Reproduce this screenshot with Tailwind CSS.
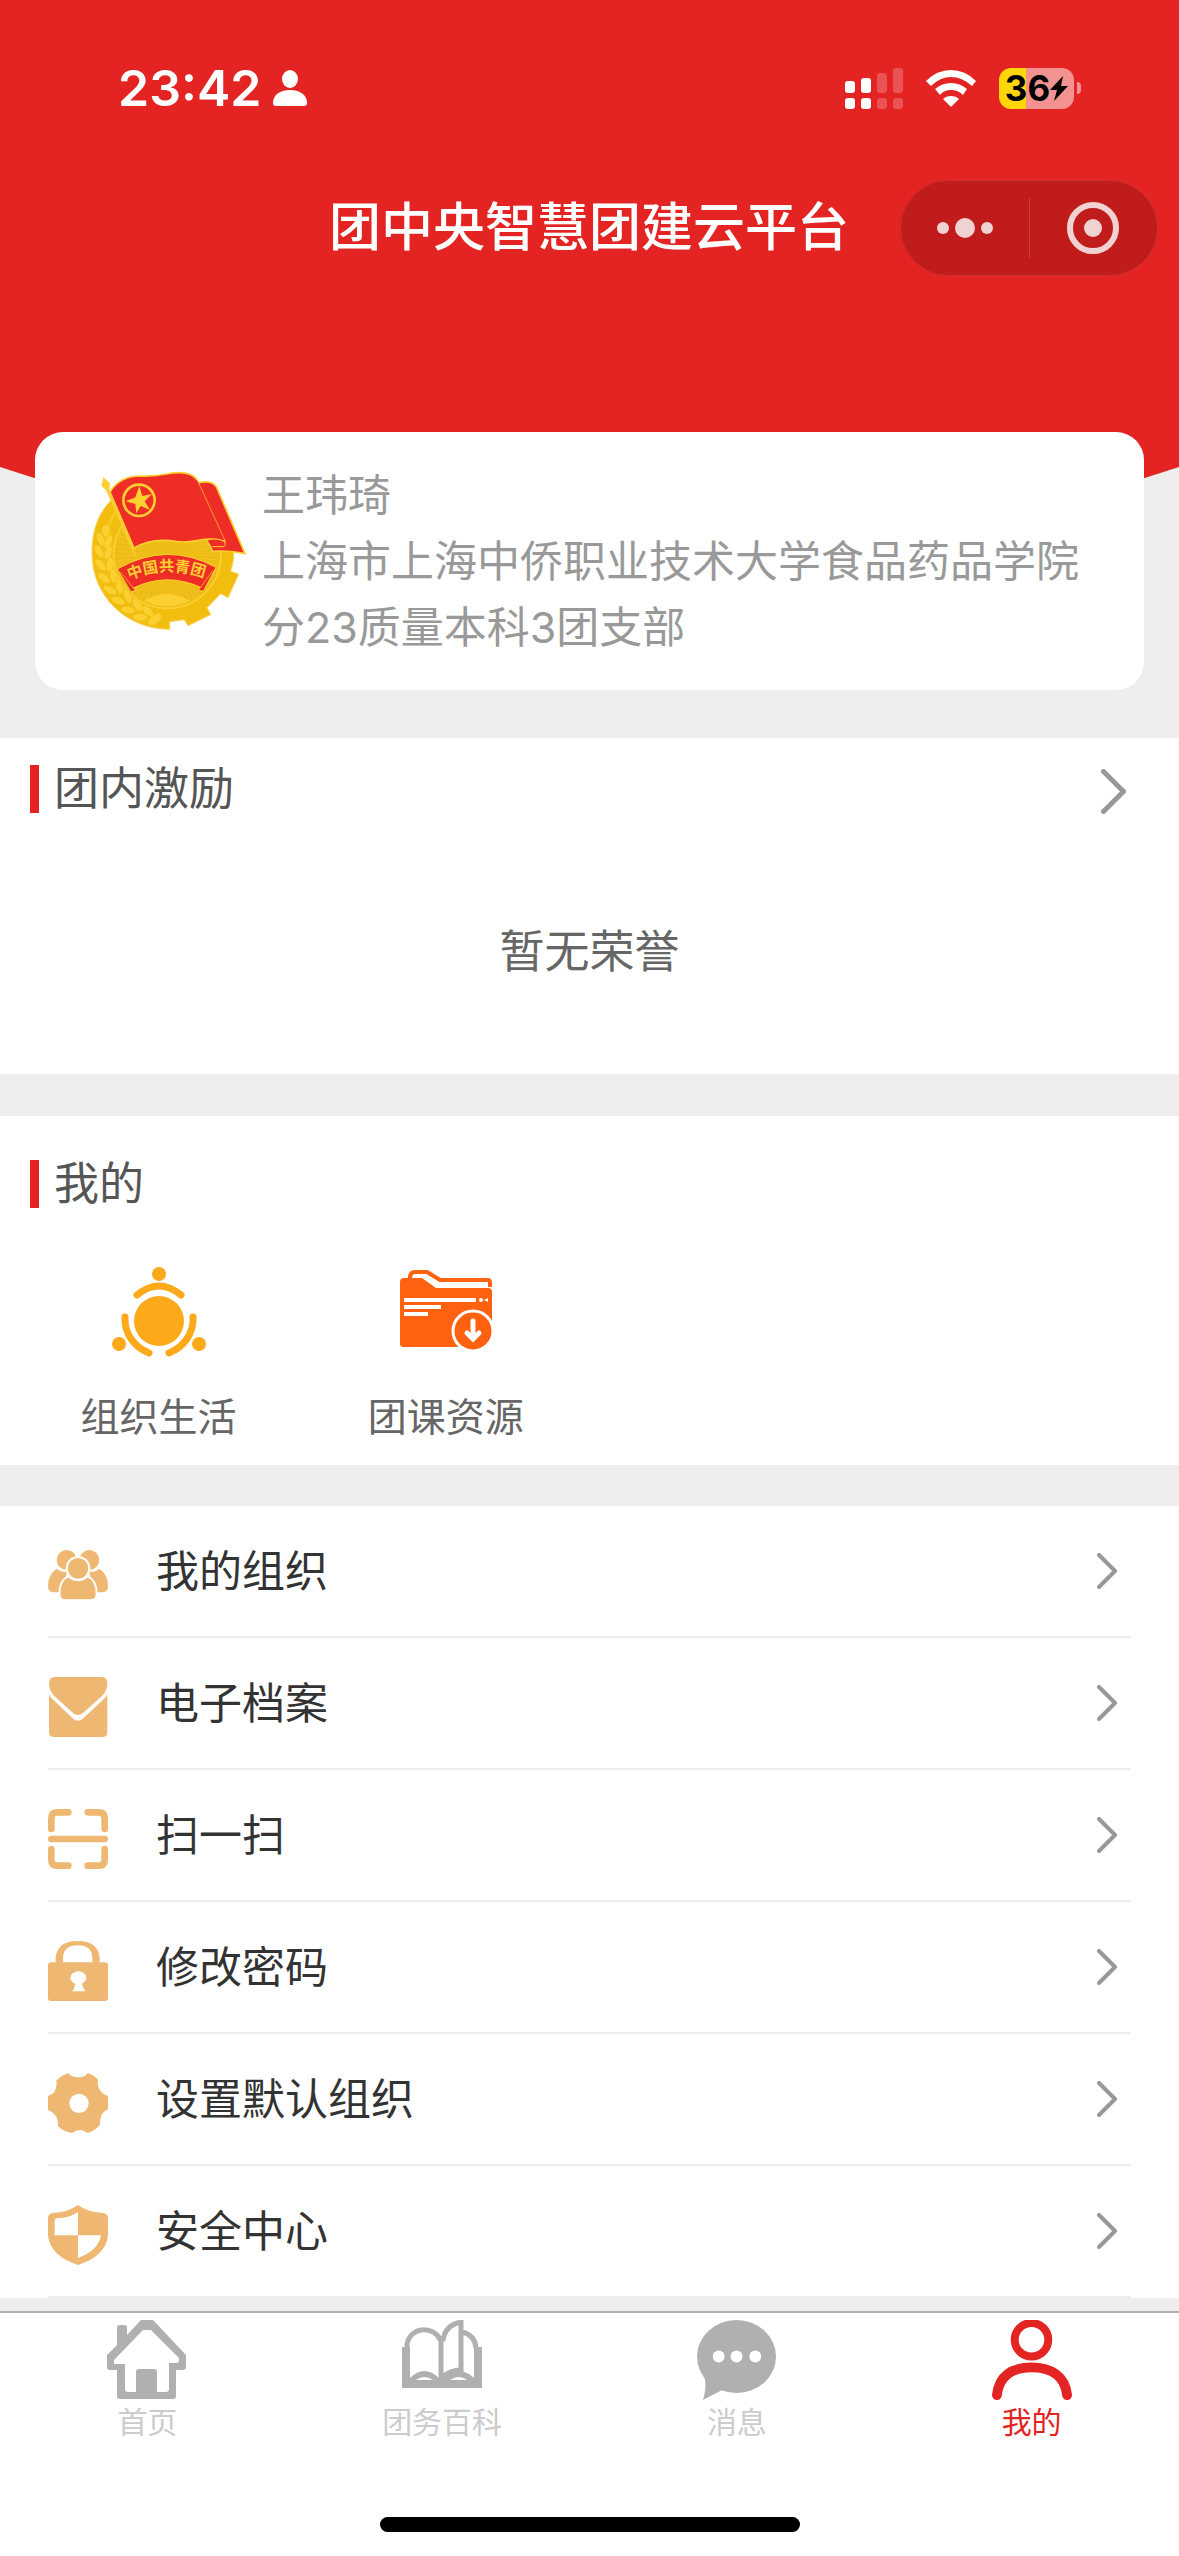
<!DOCTYPE html>
<html lang="zh-CN">
  <head>
    <meta charset="UTF-8" />
    <meta name="viewport" content="width=device-width, initial-scale=1.0" />
    <script src="https://cdn.jsdelivr.net/npm/@tailwindcss/browser@4"></script>
    <title>团中央智慧团建云平台</title>
  </head>
  <body class="flex min-h-screen flex-col bg-[#eeeeee] font-[Inter,'Noto_Sans_CJK_SC',sans-serif] text-[#333333]">
    <!-- shared arrow -->
    <svg class="hidden">
      <symbol id="arrow" viewBox="0 0 20 36">
        <path d="M2 2L18 18L2 34" fill="none" stroke="#98989a" stroke-width="4" stroke-linecap="round" stroke-linejoin="round" />
      </symbol>
    </svg>

    <!-- header and profile card -->
    <header class="relative">
      <svg class="absolute inset-x-0 top-0 h-[565px] w-full" viewBox="0 0 1179 565" preserveAspectRatio="none">
        <path d="M0 0H1179V467Q590 662 0 467Z" fill="#e42323" />
      </svg>
      <div class="relative">
        <!-- status bar -->
        <div class="flex items-center justify-between pt-[58px] pr-[98px] pl-[118px] text-white">
          <div class="flex items-center gap-3">
            <span class="text-[50px] leading-[60px] font-semibold">23:42</span>
            <svg class="h-9 w-[34px]" viewBox="0 0 34 36" fill="currentColor">
              <ellipse cx="17" cy="9" rx="8" ry="9" />
              <path d="M0 33C0 24 8 20 17 20S34 24 34 33Q34 36 31 36H3Q0 36 0 33Z" />
            </svg>
          </div>
          <div class="flex items-center gap-[23px]">
            <svg class="h-[41px] w-[58px]" viewBox="0 0 58 41" fill="currentColor">
              <rect y="13" width="10" height="12" rx="3" />
              <rect x="16" y="10" width="10" height="15" rx="3" />
              <rect y="30" width="10" height="11" rx="3" />
              <rect x="16" y="30" width="10" height="11" rx="3" />
              <g opacity="0.22">
                <rect x="32" y="5" width="10" height="20" rx="3" />
                <rect x="48" width="10" height="25" rx="3" />
                <rect x="32" y="30" width="10" height="11" rx="3" />
                <rect x="48" y="30" width="10" height="11" rx="3" />
              </g>
            </svg>
            <svg class="h-[37px] w-[50px]" viewBox="0 0 50 37" fill="currentColor">
              <path d="M0 11Q11 0 25 0T50 11L46 16Q36 7 25 7T5 16Z" />
              <path d="M9 19Q16 13 25 13T41 19L37 25Q32 20 25 20T14 25Z" />
              <path d="M17 29Q20 26 25 26T33 29L26 36Q25 37 24 36Z" />
            </svg>
            <div class="flex items-center gap-[3px]">
              <div class="flex h-[41px] w-[75px] items-center justify-center rounded-xl bg-linear-to-r from-[#ffd60a] from-36% to-[#f39291] to-36% text-black">
                <span class="text-[35px] leading-[41px] font-bold">36</span>
                <svg class="h-[25px] w-[18px]" viewBox="0 0 18 25" fill="currentColor">
                  <path d="M13 0L0 14H7L4 25L18 10H11Z" />
                </svg>
              </div>
              <div class="h-3 w-1 rounded-r-full bg-[#f39291]"></div>
            </div>
          </div>
        </div>

        <!-- title bar -->
        <div class="grid grid-cols-[1fr_auto_1fr] items-center pt-[62px] pr-[21px]">
          <span></span>
          <h1 class="pl-5 text-[52px] leading-[96px] font-medium text-white">团中央智慧团建云平台</h1>
          <div class="flex h-24 w-[258px] items-center justify-self-end rounded-full border border-[#c93030] bg-[#c11c1c] text-[#f1d2d2]">
            <button class="flex flex-1 justify-center" aria-label="更多">
              <svg class="h-5 w-14" viewBox="0 0 56 20" fill="currentColor">
                <circle cx="6" cy="10" r="6" />
                <circle cx="28" cy="10" r="10" />
                <circle cx="50" cy="10" r="6" />
              </svg>
            </button>
            <span class="h-[60px] w-px bg-[#cf3a3a]"></span>
            <button class="flex flex-1 justify-center" aria-label="关闭">
              <svg class="size-[52px]" viewBox="0 0 52 52">
                <circle cx="26" cy="26" r="23" fill="none" stroke="currentColor" stroke-width="6" />
                <circle cx="26" cy="26" r="9" fill="currentColor" />
              </svg>
            </button>
          </div>
        </div>

        <!-- profile -->
        <div class="mx-[35px] mt-39 flex items-start gap-3 rounded-[28px] bg-white pt-[30px] pr-12 pb-[30px] pl-[55px]">
          <svg class="mt-2 h-[160px] w-[160px] shrink-0" viewBox="60 60 480 480">
            <!-- gear and wheat ring -->
            <path d="M130 145C80 190 66 250 66 310C66 440 170 538 299 538V515L343 509L354 527L422 494L411 473L452 431L474 443L506 373L482 364Q492 335 492 300L300 120Z" fill="#f1bd0e" stroke="#fad35a" stroke-width="3" />
            <circle cx="292" cy="314" r="161" fill="#eebc17" stroke="#fdd032" stroke-width="5" />
            <circle cx="292" cy="314" r="110" fill="none" stroke="#fdd032" stroke-width="96" stroke-dasharray="2 9" opacity="0.5" />
            <path d="M222 452Q292 412 358 452Q292 486 222 452Z" fill="#fdd032" />
            <g fill="#fdd032" stroke="#eebc17" stroke-width="2">
              <ellipse cx="108" cy="243" rx="13" ry="19" />
              <ellipse cx="92" cy="268" rx="11" ry="22" transform="rotate(-24 92 268)" />
              <ellipse cx="115" cy="275" rx="11" ry="22" transform="rotate(24 115 275)" />
              <ellipse cx="88" cy="305" rx="11" ry="22" transform="rotate(-32 88 305)" />
              <ellipse cx="115" cy="308" rx="11" ry="22" transform="rotate(18 115 308)" />
              <ellipse cx="92" cy="345" rx="11" ry="22" transform="rotate(-42 92 345)" />
              <ellipse cx="120" cy="344" rx="11" ry="22" transform="rotate(8 120 344)" />
              <ellipse cx="102" cy="384" rx="11" ry="22" transform="rotate(-52 102 384)" />
              <ellipse cx="131" cy="378" rx="11" ry="22" transform="rotate(-4 131 378)" />
              <ellipse cx="120" cy="420" rx="11" ry="22" transform="rotate(-62 120 420)" />
              <ellipse cx="149" cy="410" rx="11" ry="22" transform="rotate(-14 149 410)" />
              <ellipse cx="144" cy="452" rx="11" ry="22" transform="rotate(-70 144 452)" />
              <ellipse cx="173" cy="439" rx="11" ry="22" transform="rotate(-24 173 439)" />
              <ellipse cx="175" cy="480" rx="11" ry="22" transform="rotate(-80 175 480)" />
              <ellipse cx="202" cy="464" rx="11" ry="22" transform="rotate(-34 202 464)" />
              <ellipse cx="210" cy="502" rx="11" ry="22" transform="rotate(-88 210 502)" />
              <ellipse cx="234" cy="484" rx="11" ry="22" transform="rotate(-44 234 484)" />
              <ellipse cx="254" cy="509" rx="13" ry="25" transform="rotate(52 254 509)" />
            </g>
            <path d="M168 150Q135 180 118 232M150 165Q125 195 112 228" fill="none" stroke="#fdd032" stroke-width="3" />
            <!-- ribbon -->
            <path d="M142 357Q290 272 438 352L400 424L384 421L392 412Q290 366 190 414L200 421L182 425Z" fill="#ee2e26" stroke="#fdd032" stroke-width="3" />
            <path d="M152 366L190 414M428 362L392 412" fill="none" stroke="#fdd032" stroke-width="2" />
            <path id="ribbon" d="M178 389Q290 342 412 386" fill="none" />
            <text class="text-[46px] font-bold" fill="#fdd032"><textPath href="#ribbon">中国共青团</textPath></text>
            <!-- flag -->
            <path d="M100 82L120 100L118 122L200 322L194 318L108 120L94 108Z" fill="#fdd032" />
            <path d="M385 98Q425 90 439 110L525 311Q480 300 428 304L412 272Z" fill="#ee2e26" stroke="#fdd032" stroke-width="5" />
            <path d="M120 126Q150 78 210 78Q250 80 290 72Q360 58 382 90L466 274Q420 262 380 272Q340 280 300 272Q240 266 192 294Z" fill="#ee2e26" />
            <path d="M382 90L466 274" stroke="#fdd032" stroke-width="2" />
            <path d="M466 274Q420 262 380 272Q340 280 300 272Q240 266 192 294L120 126Q150 78 210 78Q250 80 290 72Q360 58 382 90" fill="none" stroke="#fdd032" stroke-width="5" />
            <path d="M412 270Q440 262 464 275Q470 290 458 290H426" fill="#ee2e26" stroke="#fdd032" stroke-width="3" />
            <circle cx="207" cy="151" r="47" fill="none" stroke="#fdd032" stroke-width="8" />
            <path d="M208 108L217 138L246 132L224 154L240 180L212 168L199 190L196 162L167 154L196 142Z" fill="#fdd032" />
          </svg>
          <p class="text-[43px] leading-[66px] text-[#999999]">
            王玮琦<br />上海市上海中侨职业技术大学食品药品学院分23质量本科3团支部
          </p>
        </div>
      </div>
    </header>

    <main>
      <!-- honours -->
      <section class="mt-12 bg-white pt-[21px] pb-[84px]">
        <a href="#" class="flex items-center justify-between pr-[53px] pl-[30px]">
          <h2 class="flex items-center gap-[15px] text-[45px] leading-[60px] text-[#555555]">
            <span class="h-12 w-[9px] bg-[#e42323]"></span>团内激励
          </h2>
          <svg class="mt-1 h-[45px] w-[25px]"><use href="#arrow" /></svg>
        </a>
        <p class="pt-[95px] text-center text-[45px] leading-[76px] text-[#666666]">暂无荣誉</p>
      </section>

      <!-- my tools -->
      <section class="mt-[42px] bg-white pt-[38px] pb-5">
        <h2 class="flex items-center gap-[15px] pl-[30px] text-[45px] leading-[60px] text-[#555555]">
          <span class="h-12 w-[9px] bg-[#e42323]"></span>我的
        </h2>
        <div class="grid grid-cols-4 px-[15px] pt-[53px] text-[39px] leading-[56px] text-[#666666]">
          <a href="#" class="flex flex-col items-center gap-8">
            <svg class="h-[90px] w-[94px]" viewBox="0 0 94 90" fill="#fda91a">
              <circle cx="47" cy="54" r="25" />
              <circle cx="47" cy="7" r="7" />
              <circle cx="7" cy="77" r="7" />
              <circle cx="87" cy="77" r="7" />
              <path d="M25 28Q47 10 69 28M13 50C12 66 22 80 37 86M81 50C82 66 72 80 57 86" fill="none" stroke="#fda91a" stroke-width="7" stroke-linecap="round" />
            </svg>
            组织生活
          </a>
          <a href="#" class="flex flex-col items-center gap-8">
            <svg class="h-[90px] w-[92px]" viewBox="0 -3 92 90" fill="#fe6110">
              <path d="M10 8Q10 2 15 2H27L40 10H88Q90 10 90 13V17" fill="none" stroke="#fe6110" stroke-width="4" />
              <path d="M4 8H22L36 18H88Q92 18 92 22V73Q92 77 88 77H4Q0 77 0 73V12Q0 8 4 8Z" />
              <path d="M4 30H76M4 37H41M4 44H28" stroke="#fff" stroke-width="4" />
              <circle cx="81" cy="30" r="2" fill="#fff" />
              <path d="M88 28V32L84 30Z" fill="#fff" />
              <path d="M54 78V70H92V78Z" fill="#fff" />
              <path d="M0 70H60V77H4Q0 77 0 73Z" />
              <circle cx="73" cy="61" r="20" stroke="#fff" stroke-width="3" />
              <path d="M73 51V67M67 63L73 69L79 63" fill="none" stroke="#fff" stroke-width="5" stroke-linecap="round" />
            </svg>
            团课资源
          </a>
        </div>
      </section>

      <!-- menu -->
      <ul class="mt-[41px] bg-white px-12 text-[43px]">
        <li class="border-b-2 border-[#ededf1]">
          <a href="#" class="flex h-[130px] items-center pr-[14px]">
            <svg class="mt-2 size-[60px]" viewBox="84 132 180 180" fill="#efb872">
              <circle cx="140" cy="177" r="30" />
              <circle cx="208" cy="177" r="30" />
              <path d="M110 203Q122 214 140 212L132 274H102Q84 274 84 256Q84 220 110 203ZM238 203Q226 214 208 212L216 274H246Q264 274 264 256Q264 220 238 203Z" />
              <path d="M144 226Q174 250 204 226Q230 238 230 278Q230 298 212 298H136Q118 298 118 278Q118 238 144 226Z" stroke="#fff" stroke-width="6" />
              <rect x="110" y="299" width="128" height="6" fill="#fff" />
              <circle cx="174" cy="202" r="34" stroke="#fff" stroke-width="6" />
            </svg>
            <span class="flex-1 pl-12">我的组织</span>
            <svg class="h-9 w-5"><use href="#arrow" /></svg>
          </a>
        </li>
        <li class="border-b-2 border-[#ededf1]">
          <a href="#" class="flex h-[130px] items-center pr-[14px]">
            <svg class="mt-2 size-[60px]" viewBox="84 531 180 180" fill="#efb872">
              <path d="M87 552Q87 531 105 531H245Q262 531 262 552Q262 572 246 588L188 640Q174 650 160 640L103 588Q87 572 87 552Z" />
              <path d="M87 583Q90 590 98 598L158 655Q174 670 190 655L251 598Q259 590 262 583V697Q262 711 248 711H101Q87 711 87 697Z" />
            </svg>
            <span class="flex-1 pl-12">电子档案</span>
            <svg class="h-9 w-5"><use href="#arrow" /></svg>
          </a>
        </li>
        <li class="border-b-2 border-[#ededf1]">
          <a href="#" class="flex h-[130px] items-center pr-[14px]">
            <svg class="mt-2 size-[60px]" viewBox="84 927 180 180">
              <path d="M94 987V955Q94 937 112 937H145M203 937H236Q254 937 254 955V987M94 1047V1079Q94 1097 112 1097H145M203 1097H236Q254 1097 254 1079V1047M94 1017H254" fill="none" stroke="#efb872" stroke-width="20" stroke-linecap="round" />
            </svg>
            <span class="flex-1 pl-12">扫一扫</span>
            <svg class="h-9 w-5"><use href="#arrow" /></svg>
          </a>
        </li>
        <li class="border-b-2 border-[#ededf1]">
          <a href="#" class="flex h-[130px] items-center pr-[14px]">
            <svg class="mt-2 size-[60px]" viewBox="84 123 180 180" fill="#efb872">
              <rect x="84" y="187" width="180" height="116" rx="9" />
              <path d="M107 190V172Q113 123 173 123T239 172V190H217V172Q215 136 173 136T129 172V190Z" />
              <ellipse cx="175" cy="233" rx="24" ry="19" fill="#fff" />
              <path d="M166 244H185Q186 262 197 274H157Q166 262 166 244Z" fill="#fff" />
            </svg>
            <span class="flex-1 pl-12">修改密码</span>
            <svg class="h-9 w-5"><use href="#arrow" /></svg>
          </a>
        </li>
        <li class="border-b-2 border-[#ededf1]">
          <a href="#" class="flex h-[130px] items-center pr-[14px]">
            <svg class="mt-2 size-[60px]" viewBox="84 519 180 180" fill="#efb872">
              <path d="M145 519Q154 532 175 532T203 519Q222 525 234 539Q228 576 264 588Q266 610 264 628Q238 640 240 674Q225 692 203 699Q190 690 179 690T157 699Q130 695 114 678Q116 642 84 630Q82 610 84 588Q114 578 109 541Q124 526 145 519Z" />
              <circle cx="177" cy="610" r="29" fill="#fff" />
            </svg>
            <span class="flex-1 pl-12">设置默认组织</span>
            <svg class="h-9 w-5"><use href="#arrow" /></svg>
          </a>
        </li>
        <li class="border-b-2 border-[#ededf1]">
          <a href="#" class="flex h-[130px] items-center pr-[14px]">
            <svg class="mt-2 size-[60px]" viewBox="84 915 180 180" fill="#efb872">
              <path d="M174 915Q205 938 250 939Q264 941 264 955V1006Q258 1068 174 1095Q90 1068 84 1006V955Q84 941 98 939Q143 938 174 915Z" />
              <path d="M174 936V1006H104V962Q104 956 110 955Q145 955 174 936ZM174 1006H243Q235 1052 174 1074Z" fill="#fff" />
            </svg>
            <span class="flex-1 pl-12">安全中心</span>
            <svg class="h-9 w-5"><use href="#arrow" /></svg>
          </a>
        </li>
      </ul>
    </main>

    <!-- tab bar -->
    <nav class="mt-auto border-t-2 border-[#b0b0b0] bg-white pb-6">
      <div class="grid grid-cols-4 pt-[7px] text-[30px] leading-[44px] text-[#cccccc]">
        <a href="#" class="flex flex-col items-center">
          <svg class="size-20" viewBox="0 0 80 80" fill="#b0b0b0">
            <path fill-rule="evenodd" d="M34 0H46L79 35V47Q79 50 76 50H69V76Q69 79 66 79H13Q10 79 10 76V50H3Q0 50 0 47V35L10 25V8Q10 5 13 5H17Q20 5 20 8V15ZM36 10L7 40V44H18V69Q18 72 21 72H29V52Q29 49 32 49H47Q50 49 50 52V72H59Q62 72 62 69V43H69Q72 43 72 40V38L44 10Z" />
          </svg>
          首页
        </a>
        <a href="#" class="flex flex-col items-center">
          <svg class="size-20" viewBox="0 0 80 80" fill="none" stroke="#b0b0b0" stroke-width="5">
            <path d="M5 28V24C9 6 32 5 39 21V62M41 21C42 10 49 4 59 2V50Q48 50 41 57M60 12Q73 15 74 28" />
            <path d="M0 27H8V58Q22 44 37 58H43Q57 44 72 58V27H80V68H0ZM14 60H31Q22 54 14 60ZM48 60H65Q57 54 48 60Z" fill="#b0b0b0" fill-rule="evenodd" stroke="none" />
          </svg>
          团务百科
        </a>
        <a href="#" class="flex flex-col items-center">
          <svg class="size-20" viewBox="0 0 81 81" fill="#b0b0b0">
            <ellipse cx="40" cy="37" rx="40" ry="37" />
            <path d="M4 50Q12 62 6 81L27 70Z" />
            <g fill="#fff">
              <circle cx="22" cy="37" r="6" />
              <circle cx="40" cy="37" r="6" />
              <circle cx="59" cy="37" r="6" />
            </g>
          </svg>
          消息
        </a>
        <a href="#" class="flex flex-col items-center text-[#e42323]">
          <svg class="size-20" viewBox="0 0 81 81" fill="none" stroke="currentColor">
            <circle cx="40" cy="20" r="17" stroke-width="8" />
            <path d="M5 76C7 57 20 48 40 48S74 57 76 76" stroke-width="10" stroke-linecap="round" />
          </svg>
          我的
        </a>
      </div>
      <div class="mx-auto mt-[73px] h-[15px] w-[420px] rounded-full bg-black"></div>
    </nav>
  </body>
</html>
